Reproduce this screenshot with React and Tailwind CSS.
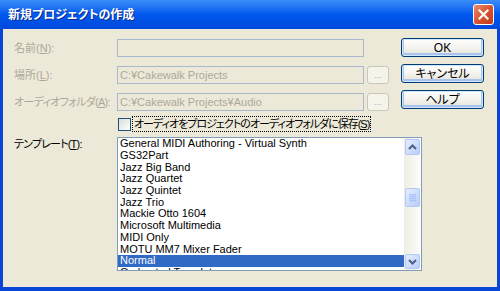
import React from 'react';

const templates = [
  'General MIDI Authoring - Virtual Synth',
  'GS32Part',
  'Jazz Big Band',
  'Jazz Quartet',
  'Jazz Quintet',
  'Jazz Trio',
  'Mackie Otto 1604',
  'Microsoft Multimedia',
  'MIDI Only',
  'MOTU MM7 Mixer Fader',
  'Normal',
  'Orchestral Template',
];

function Label({ text, acc, tight }) {
  return (
    <div
      className={`w-[103px] shrink-0 text-[11px] leading-[12px] text-[#ACA899] [font-feature-settings:'palt'] whitespace-nowrap ${
        tight ? 'tracking-[-0.7px]' : ''
      }`}
    >
      {text}(<span className="underline">{acc}</span>):
    </div>
  );
}

function DisabledInput({ value }) {
  return (
    <div className="w-[247px] h-[18px] border border-[#A7B9CD] bg-[#ECE9D8] px-[2px] flex items-center text-[11px] text-[#ACA899] whitespace-nowrap overflow-hidden">
      {value}
    </div>
  );
}

function DotsButton() {
  return (
    <div className="ml-[3px] w-[22px] h-[18px] rounded-[3px] border border-[#C9C7BA] bg-[#F5F4EA] flex items-end justify-center pb-[3px] text-[9px] leading-[9px] text-[#ACA899]">
      ...
    </div>
  );
}

function PushButton({ children }) {
  return (
    <div className="w-[83px] h-[19px] rounded-[3px] border border-[#003C74] bg-linear-to-b from-[#FFFFFF] via-[#F4F3EE] to-[#E3E1D6] shadow-[inset_0_0_0_1px_#CEE7FF,inset_0_-1px_0_2px_#A9C4EE] flex items-center justify-center text-[12px] leading-[12px] text-black [font-feature-settings:'palt']">
      {children}
    </div>
  );
}

function ScrollBtn({ children, h }) {
  return (
    <div className={`mx-[1px] ${h} rounded-[2px] border border-[#B4C8F5] bg-linear-to-br from-[#E6EEFF] to-[#B9CDF8] flex items-center justify-center`}>
      {children}
    </div>
  );
}

export default function App() {
  return (
    <div className="w-[500px] h-[291px] bg-[#0A46D6] flex flex-col font-['Liberation_Sans','Noto_Sans_CJK_JP',sans-serif] select-none overflow-hidden">
      {/* title bar */}
      <div className="h-[29px] shrink-0 flex items-center pl-[8px] pr-[6px] bg-linear-to-b from-[#3A8CF8] via-[#0058EE] to-[#0049DC]">
        <span className="text-white font-bold text-[12px] leading-[14px] [font-feature-settings:'palt'] [text-shadow:1px_1px_#0A2A8F]">
          新規プロジェクトの作成
        </span>
        <div className="ml-auto w-[21px] h-[21px] rounded-[3px] border border-white bg-linear-to-br from-[#E98C6E] via-[#D9532F] to-[#C0391A] flex items-center justify-center">
          <svg width="11" height="11" viewBox="0 0 11 11">
            <path d="M1.5 1.5 L9.5 9.5 M9.5 1.5 L1.5 9.5" stroke="white" strokeWidth="2.2" strokeLinecap="square" />
          </svg>
        </div>
      </div>

      {/* body */}
      <div className="flex-1 mx-[3px] mb-[4px] bg-[#ECE9D8] pl-[11px] pt-[10px] flex flex-col">
        <div className="flex">
          <div className="flex flex-col gap-[9px]">
            <div className="flex items-center h-[18px]">
              <Label text="名前" acc="N" />
              <DisabledInput value="" />
            </div>
            <div className="flex items-center h-[18px]">
              <Label text="場所" acc="L" />
              <DisabledInput value="C:¥Cakewalk Projects" />
              <DotsButton />
            </div>
            <div className="flex items-center h-[18px]">
              <Label text="オーディオフォルダ" acc="A" tight />
              <DisabledInput value="C:¥Cakewalk Projects¥Audio" />
              <DotsButton />
            </div>
          </div>
          <div className="ml-[12px] mt-[-1px] flex flex-col gap-[7px]">
            <PushButton>OK</PushButton>
            <PushButton>キャンセル</PushButton>
            <PushButton>ヘルプ</PushButton>
          </div>
        </div>

        {/* checkbox */}
        <div className="mt-[5px] h-[16px] flex items-center pl-[104px]">
          <div className="w-[13px] h-[13px] border border-[#1C5180] bg-linear-to-br from-[#DCDCD7] to-[#FFFFFF]" />
          <div className="ml-[1px] h-[16px] px-[1px] border border-dotted border-black flex items-center text-[11px] leading-[12px] tracking-[-1px] text-black [font-feature-settings:'palt'] whitespace-nowrap">
            オーディオをプロジェクトのオーディオフォルダに保存(<span className="underline">S</span>)
          </div>
        </div>

        {/* template list */}
        <div className="mt-[5px] flex">
          <div className="w-[103px] shrink-0 text-[11px] leading-[12px] tracking-[-0.8px] text-black [font-feature-settings:'palt'] whitespace-nowrap pt-[1px]">
            テンプレート(<span className="underline">T</span>):
          </div>
          <div className="w-[305px] h-[134px] border border-[#7F9DB9] bg-white flex">
            <div className="flex-1 overflow-hidden">
              {templates.map((t) => (
                <div
                  key={t}
                  className={`h-[11.7px] pl-[2px] flex items-center text-[11px] leading-[11px] whitespace-nowrap ${
                    t === 'Normal' ? 'bg-[#316AC5] text-white' : 'text-black'
                  }`}
                >
                  {t}
                </div>
              ))}
            </div>
            <div className="w-[17px] flex flex-col py-[1px] bg-linear-to-r from-[#EEEDE5] to-[#FDFDFA]">
              <ScrollBtn h="h-[16px]">
                <svg width="9" height="6" viewBox="0 0 9 6">
                  <path d="M1 5 L4.5 1.5 L8 5" fill="none" stroke="#4D6185" strokeWidth="2" />
                </svg>
              </ScrollBtn>
              <div className="h-[33px]" />
              <ScrollBtn h="h-[19px]">
                <svg width="7" height="8" viewBox="0 0 7 8">
                  <path d="M0 1.5 H7 M0 3.5 H7 M0 5.5 H7 M0 7.5 H7" stroke="#EEF4FE" strokeWidth="1" />
                  <path d="M0 1 H7 M0 3 H7 M0 5 H7 M0 7 H7" stroke="#8CB0F8" strokeWidth="1" />
                </svg>
              </ScrollBtn>
              <div className="flex-1" />
              <ScrollBtn h="h-[15px]">
                <svg width="9" height="6" viewBox="0 0 9 6">
                  <path d="M1 1 L4.5 4.5 L8 1" fill="none" stroke="#4D6185" strokeWidth="2" />
                </svg>
              </ScrollBtn>
            </div>
          </div>
        </div>
      </div>
    </div>
  );
}
